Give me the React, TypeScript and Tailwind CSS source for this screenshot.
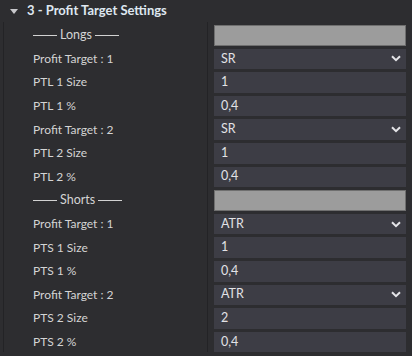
import React from 'react';

type Row =
  | { kind: 'sep'; label: string }
  | { kind: 'select'; label: string; value: string }
  | { kind: 'input'; label: string; value: string };

const rows: Row[] = [
  { kind: 'sep', label: 'Longs' },
  { kind: 'select', label: 'Profit Target : 1', value: 'SR' },
  { kind: 'input', label: 'PTL 1 Size', value: '1' },
  { kind: 'input', label: 'PTL 1 %', value: '0,4' },
  { kind: 'select', label: 'Profit Target : 2', value: 'SR' },
  { kind: 'input', label: 'PTL 2 Size', value: '1' },
  { kind: 'input', label: 'PTL 2 %', value: '0,4' },
  { kind: 'sep', label: 'Shorts' },
  { kind: 'select', label: 'Profit Target : 1', value: 'ATR' },
  { kind: 'input', label: 'PTS 1 Size', value: '1' },
  { kind: 'input', label: 'PTS 1 %', value: '0,4' },
  { kind: 'select', label: 'Profit Target : 2', value: 'ATR' },
  { kind: 'input', label: 'PTS 2 Size', value: '2' },
  { kind: 'input', label: 'PTS 2 %', value: '0,4' },
];

function Chevron() {
  return (
    <svg width="10" height="7" viewBox="0 0 10 7" className="mr-[5px]">
      <path d="M1 1.2 L5 5.2 L9 1.2" fill="none" stroke="#e4e4e8" strokeWidth="2" />
    </svg>
  );
}

function Label({ row }: { row: Row }) {
  if (row.kind === 'sep') {
    return (
      <div className="flex items-center gap-[3px] pl-[29px]">
        <span className="block h-[1.5px] w-[24px] bg-[#d2d2d2]" />
        <span className="text-[12.5px]">{row.label}</span>
        <span className="block h-[1.5px] w-[24px] bg-[#d2d2d2]" />
      </div>
    );
  }
  return <div className="pl-[29px]">{row.label}</div>;
}

function Field({ row }: { row: Row }) {
  if (row.kind === 'sep') {
    return <div className="h-[20.6px] w-[192px] border border-[#6f6f6f] bg-[#9c9c9c]" />;
  }
  return (
    <div className="flex h-[20.6px] w-[192px] items-center justify-between bg-[#3d3d45] pl-[7px] text-[12.5px] text-[#e2e2e6]">
      <span>{row.value}</span>
      {row.kind === 'select' && <Chevron />}
    </div>
  );
}

export default function App() {
  return (
    <div
      className="h-[356px] w-[412px] overflow-hidden bg-[#2d2d30] text-[12px] text-[#d4d4d4]"
      style={{ fontFamily: 'Lato, "Noto Sans", sans-serif' }}
    >
      {/* Header */}
      <div className="flex h-[22px] items-center pl-[10px]">
        <svg width="8" height="5" viewBox="0 0 8 5">
          <path d="M0 0 H8 L4 5 Z" fill="#c8c8cc" />
        </svg>
        <span className="ml-[9px] text-[13px] font-bold text-[#dfe7f0]">3 - Profit Target Settings</span>
      </div>

      {/* Rows */}
      <div className="ml-[3px] border-l border-[#232326]">
        {rows.map((row, i) => (
          <div key={i} className="flex h-[23.6px]">
            <div className="flex w-[203px] items-center pt-[3px]">
              <Label row={row} />
            </div>
            <div className="border-l border-[#232326] pl-[6px] pt-[3px]">
              <Field row={row} />
            </div>
          </div>
        ))}
      </div>
    </div>
  );
}
